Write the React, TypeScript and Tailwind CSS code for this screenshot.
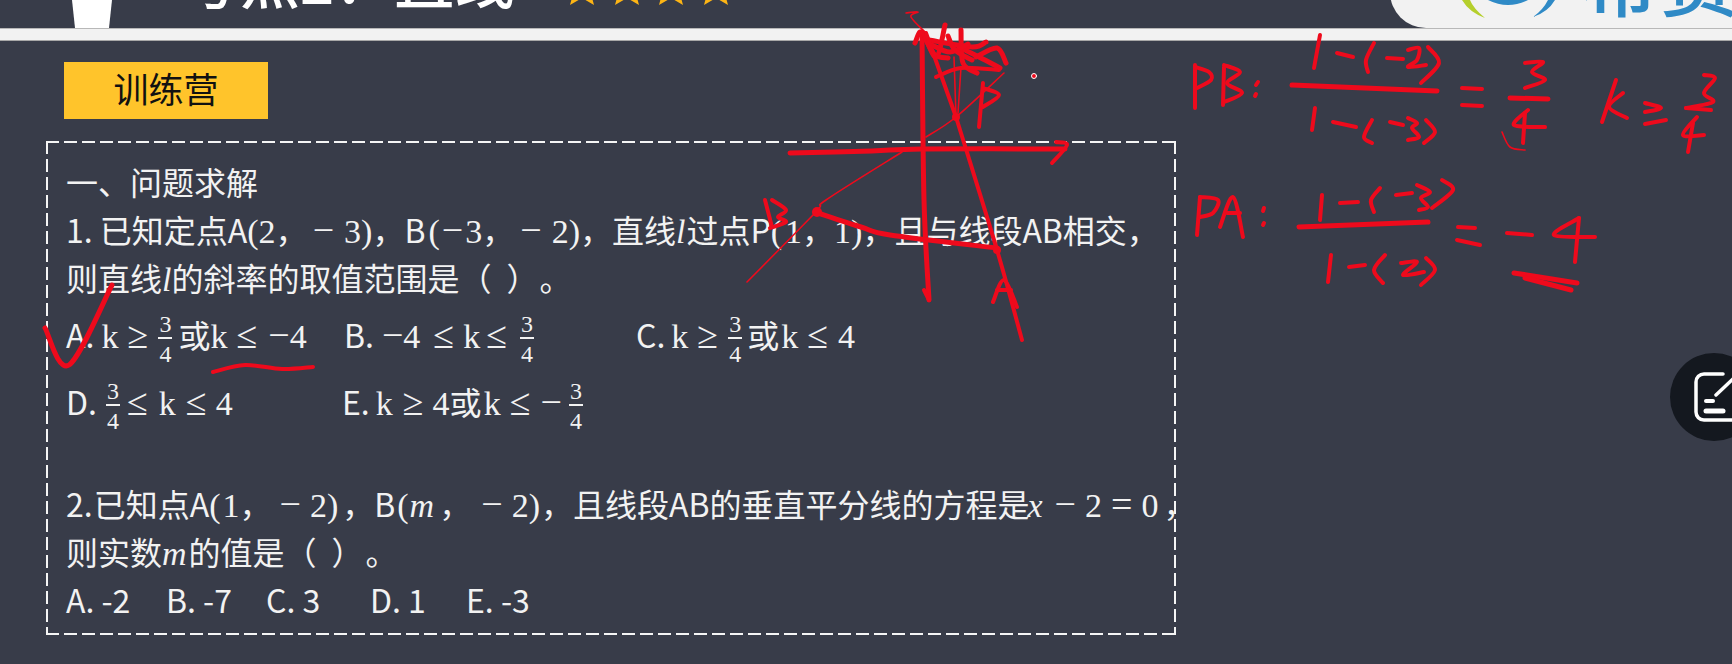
import React from "react";

type P = [number, number];

function smooth(pts: P[]): string {
  if (pts.length < 3) return "M" + pts.map((p) => p.join(",")).join("L");
  let d = `M${pts[0][0]},${pts[0][1]}`;
  for (let i = 0; i < pts.length - 1; i++) {
    const p0 = pts[Math.max(i - 1, 0)];
    const p1 = pts[i];
    const p2 = pts[i + 1];
    const p3 = pts[Math.min(i + 2, pts.length - 1)];
    const c1x = p1[0] + (p2[0] - p0[0]) / 6;
    const c1y = p1[1] + (p2[1] - p0[1]) / 6;
    const c2x = p2[0] - (p3[0] - p1[0]) / 6;
    const c2y = p2[1] - (p3[1] - p1[1]) / 6;
    d += `C${c1x},${c1y} ${c2x},${c2y} ${p2[0]},${p2[1]}`;
  }
  return d;
}

const heavy: P[][] = [
  [[922, 33], [924, 200], [929, 300]],
  [[790, 153], [872, 151], [922, 149], [1065, 149]],
  [[815, 212], [861, 227], [890, 235], [997, 248]],
  [[915, 43], [922, 32], [936, 57], [945, 25]],
  [[925, 38], [935, 55], [948, 58]],
  [[929, 40], [972, 47], [986, 42]],
  [[961, 30], [963, 63], [977, 73]],
  [[976, 57], [997, 48], [1006, 63]],
  [[965, 50], [985, 60], [1000, 68]],
  [[932, 45], [950, 52], [968, 44]],
  [[948, 36], [955, 50], [972, 60]],
  [[1292, 85], [1437, 91]],
  [[1299, 227], [1428, 222]],
  [[1514, 273], [1577, 283]],
  [[1525, 278], [1571, 290]],
  [[1510, 98], [1548, 99]],
  [[45, 328], [69, 365], [112, 285]],
];

const thick: P[][] = [
  [[924, 290], [929, 300]],
  [[1056, 142], [1067, 145], [1052, 163]],
  [[956, 117], [997, 250], [1022, 340]],
  [[936, 77], [961, 68], [999, 70]],
  [[926, 33], [956, 117]],
  [[979, 127], [983, 83]],
  [[983, 88], [999, 95], [983, 107]],
  [[765, 200], [772, 227]],
  [[772, 200], [786, 210], [778, 217], [786, 222], [770, 228]],
  [[993, 302], [1004, 280], [1017, 307]],
  [[997, 290], [1011, 290]],
  [[213, 372], [245, 365], [282, 369], [313, 367]],
  [[1195, 65], [1195, 108]],
  [[1195, 67], [1209, 72], [1211, 80], [1197, 88]],
  [[1224, 67], [1223, 105]],
  [[1224, 65], [1240, 72], [1227, 83], [1242, 93], [1224, 102]],
  [[1258, 82], [1256, 85]],
  [[1256, 94], [1255, 96]],
  [[1320, 35], [1314, 68]],
  [[1337, 53], [1353, 57]],
  [[1374, 43], [1366, 60], [1368, 72]],
  [[1387, 58], [1403, 59]],
  [[1408, 50], [1419, 48], [1417, 60], [1408, 67], [1426, 65]],
  [[1428, 47], [1439, 63], [1421, 83]],
  [[1315, 108], [1312, 130]],
  [[1333, 122], [1356, 127]],
  [[1372, 120], [1364, 137], [1372, 143]],
  [[1390, 122], [1403, 125]],
  [[1408, 118], [1417, 123], [1412, 128], [1419, 137], [1408, 140]],
  [[1426, 120], [1435, 132], [1424, 143]],
  [[1462, 88], [1482, 89]],
  [[1462, 105], [1482, 106]],
  [[1525, 63], [1543, 62], [1532, 72], [1545, 80], [1525, 88]],
  [[1528, 110], [1514, 125], [1545, 127]],
  [[1525, 113], [1523, 143]],
  [[1616, 80], [1602, 122]],
  [[1623, 93], [1609, 107], [1627, 118]],
  [[1645, 103], [1661, 108], [1645, 112]],
  [[1645, 124], [1666, 120]],
  [[1704, 75], [1715, 78], [1704, 93], [1713, 102], [1686, 108]],
  [[1686, 108], [1711, 110]],
  [[1697, 117], [1683, 135], [1704, 135]],
  [[1693, 123], [1688, 152]],
  [[1200, 197], [1197, 235]],
  [[1200, 197], [1218, 200], [1213, 213], [1200, 217]],
  [[1220, 227], [1233, 197], [1243, 237]],
  [[1227, 213], [1240, 213]],
  [[1264, 208], [1263, 211]],
  [[1264, 223], [1263, 225]],
  [[1322, 195], [1320, 220]],
  [[1340, 203], [1358, 202]],
  [[1380, 188], [1371, 200], [1374, 212]],
  [[1396, 195], [1412, 193]],
  [[1417, 185], [1430, 192], [1421, 198], [1428, 207], [1419, 210]],
  [[1442, 180], [1453, 190], [1432, 208]],
  [[1331, 255], [1328, 282]],
  [[1349, 267], [1365, 265]],
  [[1385, 255], [1374, 270], [1383, 283]],
  [[1401, 263], [1417, 262], [1403, 275], [1424, 272]],
  [[1426, 258], [1435, 270], [1421, 285]],
  [[1458, 227], [1475, 228]],
  [[1457, 240], [1480, 245]],
  [[1507, 233], [1532, 235]],
  [[1579, 218], [1554, 235], [1595, 237]],
  [[1579, 218], [1575, 262]],
];

const thin: P[][] = [
  [[906, 13], [918, 12], [911, 17], [926, 33]],
  [[1004, 73], [956, 117], [926, 137]],
  [[902, 152], [826, 200], [815, 213], [747, 282]],
  [[954, 57], [956, 117]],
  [[961, 67], [958, 113]],
  [[1502, 132], [1510, 147], [1525, 150]],
];

function Ink() {
  return (
    <svg
      className="absolute left-0 top-0 pointer-events-none"
      width="1732"
      height="664"
      viewBox="0 0 1732 664"
      fill="none"
      stroke="#ee0a1c"
      strokeLinecap="round"
      strokeLinejoin="round"
    >
      {heavy.map((p, i) => (
        <path key={i} d={smooth(p)} strokeWidth="5" />
      ))}
      {thick.map((p, i) => (
        <path key={i} d={smooth(p)} strokeWidth="4" />
      ))}
      {thin.map((p, i) => (
        <path key={i} d={smooth(p)} strokeWidth="1.6" />
      ))}
      <g fill="#ee0a1c" stroke="none">
        <circle cx="817" cy="212" r="5" />
        <circle cx="956" cy="117" r="4" />
        <circle cx="997" cy="250" r="4" />
      </g>
      <circle cx="1034" cy="76" r="2.5" fill="#ee0a1c" stroke="#ffffff" strokeWidth="1" />
    </svg>
  );
}

function M({ children, className = "" }: { children: React.ReactNode; className?: string }) {
  return <span className={"font-['Liberation_Serif',serif] text-[34px] " + className}>{children}</span>;
}

function Op({ children, className = "" }: { children: React.ReactNode; className?: string }) {
  return <span className={"font-['Liberation_Serif',serif] text-[38px] leading-none " + className}>{children}</span>;
}

function Frac({ className = "" }: { className?: string }) {
  return (
    <span
      className={
        "inline-flex h-[54px] w-[14px] flex-col items-center justify-between align-middle font-['Liberation_Serif',serif] text-[24px] leading-[24px] " +
        className
      }
    >
      <span className="h-[27px] w-full border-b-2 border-[#f2f2f2] text-center">3</span>
      <span>4</span>
    </span>
  );
}

function Star() {
  return (
    <svg width="38" height="36" viewBox="0 0 38 36" className="shrink-0">
      <polygon points="19,0 24,13 38,14 27.5,23 31,36 19,29 7,36 10.5,23 0,14 14,13" fill="#fdb515" />
      <polygon points="19,7 22,16 31,17 24.5,22.5 26,30 19,26 12,30 13.5,22.5 7,17 16,16" fill="#ffe9a8" />
    </svg>
  );
}

const rowClass = "whitespace-pre leading-[48px] h-[48px]";
const optClass = "whitespace-pre leading-[67px] h-[67px] flex";

export default function App() {
  return (
    <div className="relative w-[1732px] h-[664px] overflow-hidden bg-[#383c49] font-['Noto_Sans_CJK_SC',sans-serif] text-[#f2f2f2]">
      <header className="flex h-[28px] items-start overflow-hidden">
        <svg width="40" height="28" viewBox="0 0 40 28" className="ml-[72px] shrink-0">
          <polygon points="0,0 40,0 37,28 3,28" fill="#ffffff" />
        </svg>
        <div className="ml-[68px] -mt-[52px] shrink-0 text-[60px] leading-[60px] font-medium text-white whitespace-pre">
          考点2：直线
        </div>
        <div className="ml-[49px] -mt-[31px] flex gap-[6.6px] shrink-0">
          <Star />
          <Star />
          <Star />
          <Star />
        </div>
        <div className="ml-auto -mt-[8px] flex h-[36px] w-[342px] shrink-0 overflow-hidden rounded-bl-[36px] bg-[#f2f2f2]">
          <svg width="93" height="18" viewBox="0 0 93 18" className="ml-[72px] mt-[8px] shrink-0">
            <path d="M0,0 Q7,12 23,18 Q11,8 8,0 Z" fill="#b5cf2c" />
            <path d="M26,0 Q46,10 66,0 Z" fill="#2f8ac6" />
            <path d="M71,17 Q86,12 93,0 L86,0 Q81,10 71,17 Z" fill="#2f8ac6" />
          </svg>
          <div className="ml-[24px] -mt-[57px] shrink-0 text-[80px] leading-[80px] font-medium text-[#2f8ac6] whitespace-pre">
            希赛
          </div>
        </div>
      </header>
      <div className="h-[13px] bg-[#f2f2f2] border-t border-b border-t-[#b8b8b8] border-b-[#a8a8a8]" />

      <main className="pl-[46px] pt-[21px]">
        <div className="ml-[18px] flex h-[57px] w-[204px] items-center justify-center bg-[#ffc42b] pb-[4px] text-[35px] text-[#111111]">
          训练营
        </div>
        <section className="mt-[22px] h-[494px] w-[1130px] pl-[20px] pt-[16px] text-[32px] [background-image:linear-gradient(90deg,#f5f5f5_13px,transparent_13px),linear-gradient(90deg,#f5f5f5_13px,transparent_13px),linear-gradient(180deg,#f5f5f5_13px,transparent_13px),linear-gradient(180deg,#f5f5f5_13px,transparent_13px)] [background-size:18px_2px,18px_2px,2px_18px,2px_18px] [background-position:0_0,0_100%,0_0,100%_0] [background-repeat:repeat-x,repeat-x,repeat-y,repeat-y]">
          <div className={rowClass}>一、问题求解</div>
          <div className={rowClass}>
            1. 已知定点A<M>(2</M>，<Op className="ml-[5px]">−</Op>
            <M className="ml-[10px]">3)</M>，B<M className="ml-[3px]">(</M>
            <Op className="ml-[2px]">−</Op>
            <M className="ml-[2px]">3</M>，<Op className="ml-[6px]">−</Op>
            <M className="ml-[10px]">2)</M>，直线<M className="italic">l</M>
            <span className="ml-[1px]">过点P</span>
            <M>(</M>
            <M className="ml-[3px]">1</M>，<M>1)</M>，且与线段AB相交，
          </div>
          <div className={rowClass}>
            则直线<M className="italic">l</M>的斜率的取值范围是（<span className="ml-[15px]">）</span>
            <span className="ml-[17px]">。</span>
          </div>
          <div className={optClass}>
            <div className="w-[278px] shrink-0">
              A. <M>k</M>
              <Op className="ml-[9px]">≥</Op>
              <Frac className="ml-[10px]" />
              <span className="ml-[6px]">或</span>
              <M>k</M>
              <Op className="ml-[9px]">≤</Op>
              <Op className="ml-[11px]">−</Op>
              <M>4</M>
            </div>
            <div className="w-[292px] shrink-0">
              B.
              <Op className="ml-[8px]">−</Op>
              <M>4</M>
              <Op className="ml-[13px]">≤</Op>
              <M className="ml-[9px]">k</M>
              <Op className="ml-[6px]">≤</Op>
              <Frac className="ml-[13px]" />
            </div>
            <div className="shrink-0">
              C.<M className="ml-[6px]">k</M>
              <Op className="ml-[9px]">≥</Op>
              <Frac className="ml-[10px]" />
              <span className="ml-[5px]">或</span>
              <M className="ml-[2px]">k</M>
              <Op className="ml-[9px]">≤</Op>
              <M className="ml-[10px]">4</M>
            </div>
          </div>
          <div className={optClass}>
            <div className="w-[276px] shrink-0">
              D.
              <Frac className="ml-[9px]" />
              <Op className="ml-[7px]">≤</Op>
              <M className="ml-[11px]">k</M>
              <Op className="ml-[10px]">≤</Op>
              <M className="ml-[9px]">4</M>
            </div>
            <div className="shrink-0">
              E.<M className="ml-[6px]">k</M>
              <Op className="ml-[10px]">≥</Op>
              <M className="ml-[9px]">4</M>或<M className="ml-[2px]">k</M>
              <Op className="ml-[9px]">≤</Op>
              <Op className="ml-[10px]">−</Op>
              <Frac className="ml-[7px]" />
            </div>
          </div>
          <div className={rowClass + " mt-[44px]"}>
            2.<span className="ml-[1px]">已知点A</span>
            <M>(</M>
            <M className="ml-[2px]">1</M>，<Op className="ml-[8px]">−</Op>
            <M className="ml-[9px]">2)</M>
            <span className="ml-[4px]">，</span>B<M className="ml-[2px]">(</M>
            <M className="italic ml-[1px]">m</M>
            <span className="ml-[5px]">，</span>
            <Op className="ml-[10px]">−</Op>
            <M className="ml-[9px]">2)</M>
            <span className="ml-[1px]">，</span>且线段AB的垂直平分线的方程是<M className="italic -ml-[2px]">x</M>
            <Op className="ml-[12px]">−</Op>
            <M className="ml-[9px]">2</M>
            <Op className="ml-[9px]">=</Op>
            <M className="ml-[9px]">0</M>
            <span className="ml-[5px]">，</span>
          </div>
          <div className={rowClass + " h-[46px]"}>
            则实数<M className="italic">m</M>
            <span className="ml-[2px]">的值是（</span>
            <span className="ml-[15px]">）</span>
            <span className="ml-[18px]">。</span>
          </div>
          <div className="flex h-[48px] leading-[48px] whitespace-pre">
            <div className="w-[100px]">A. -2</div>
            <div className="w-[100px]">B. -7</div>
            <div className="w-[104px]">C. 3</div>
            <div className="w-[96px]">D. 1</div>
            <div>E. -3</div>
          </div>
        </section>
      </main>

      <Ink />

      <button className="absolute left-[1670px] top-[353px] flex h-[88px] w-[88px] items-center rounded-full bg-[#14181f] pl-[23px]">
        <svg width="44" height="52" viewBox="0 0 44 52" fill="none" stroke="#ffffff" strokeLinecap="round">
          <path d="M30,3 H11 a8,8 0 0 0 -8,8 V41 a8,8 0 0 0 8,8 H39" strokeWidth="3.5" />
          <path d="M23,24 L42,6" strokeWidth="3.5" />
          <path d="M13,30 H20" strokeWidth="4" />
          <path d="M13,40 H30" strokeWidth="5" />
        </svg>
      </button>
    </div>
  );
}
